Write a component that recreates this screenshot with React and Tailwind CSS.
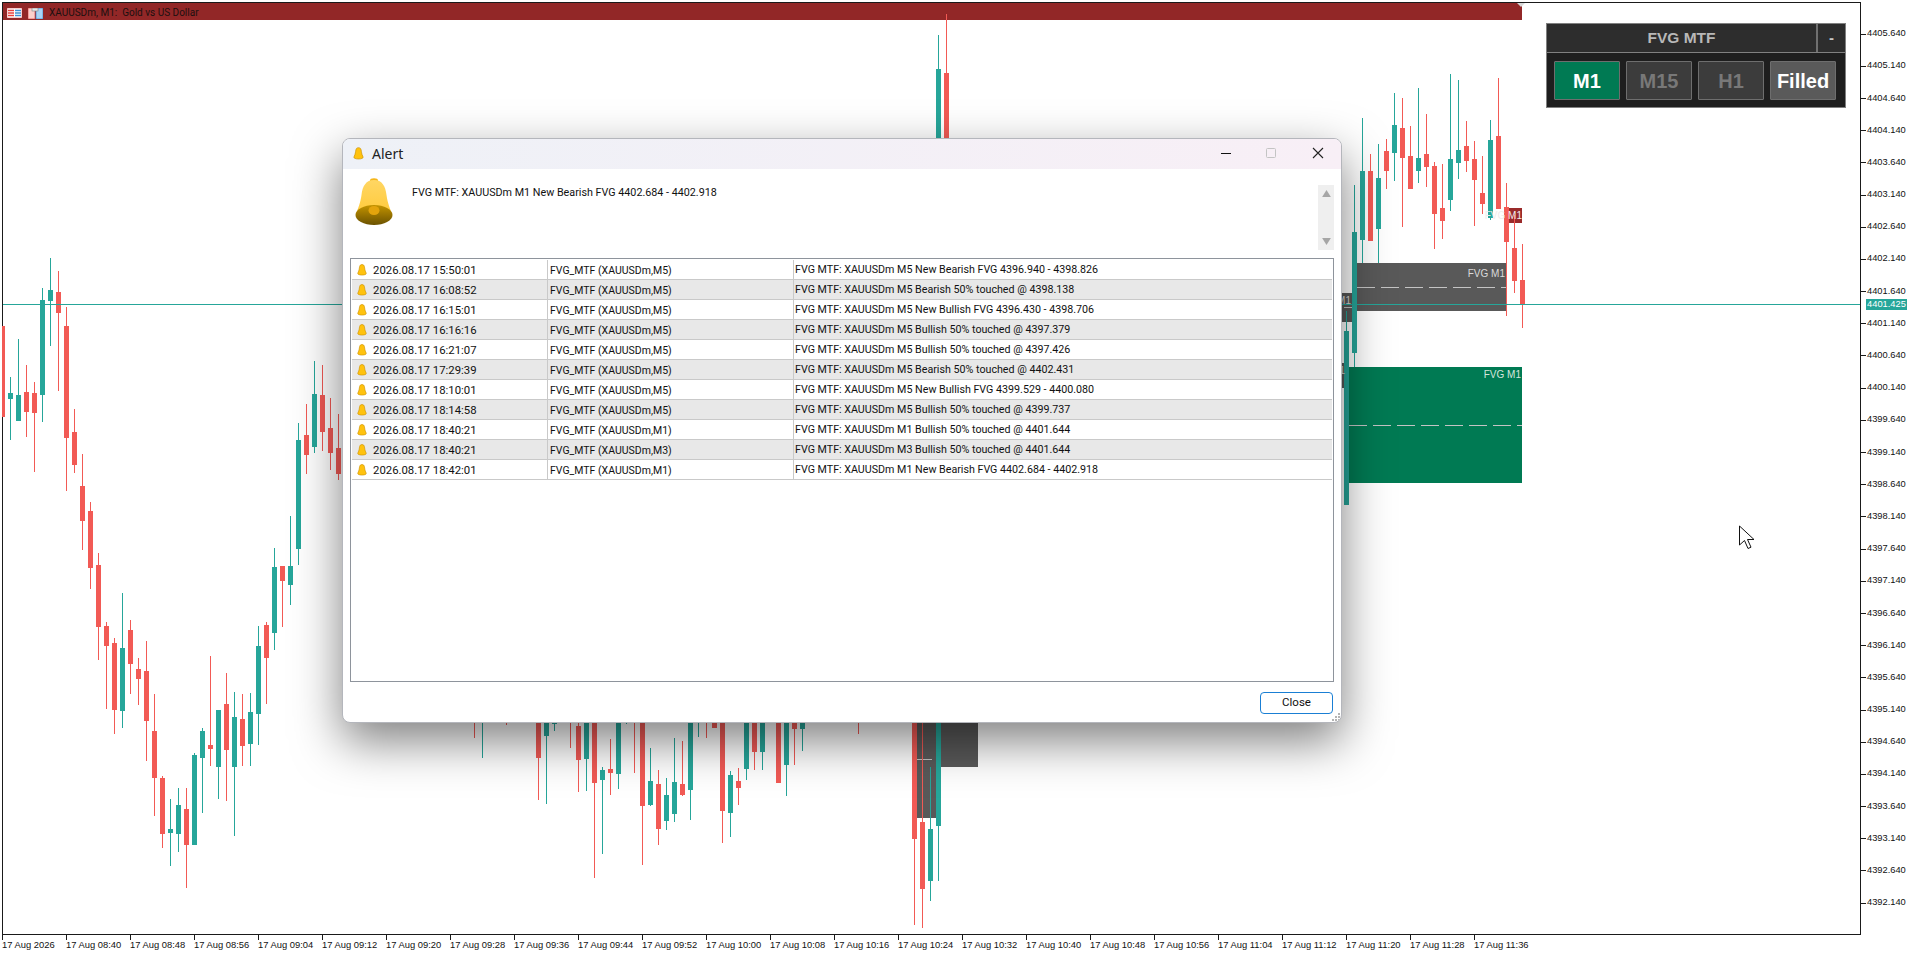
import React from 'react';

const UP = '#26a69a';
const DOWN = '#f25a55';

// [x, up?, wickTop, wickBottom, bodyTop, bodyBottom] in page pixels
const candles = [
  [2, 0, 326, 417, 326, 417],
  [10, 1, 377, 440, 393, 399],
  [18, 1, 339, 421, 395, 421],
  [26, 0, 365, 437, 392, 412],
  [34, 0, 382, 472, 393, 413],
  [42, 1, 288, 422, 300, 395],
  [50, 1, 258, 346, 290, 301],
  [58, 0, 271, 391, 292, 313],
  [66, 0, 307, 491, 326, 438],
  [74, 0, 409, 473, 432, 465],
  [82, 0, 454, 550, 486, 521],
  [90, 0, 502, 589, 511, 568],
  [98, 0, 553, 660, 565, 627],
  [106, 0, 622, 709, 626, 646],
  [114, 0, 638, 734, 643, 710],
  [122, 1, 593, 728, 648, 711],
  [130, 0, 620, 694, 630, 664],
  [138, 0, 658, 705, 669, 679],
  [146, 0, 641, 761, 671, 721],
  [154, 0, 694, 816, 731, 778],
  [162, 0, 776, 848, 778, 834],
  [170, 1, 799, 866, 829, 833],
  [178, 1, 788, 852, 805, 834],
  [186, 0, 788, 888, 809, 845],
  [194, 1, 753, 845, 755, 845],
  [202, 1, 728, 813, 731, 758],
  [210, 0, 656, 766, 745, 749],
  [218, 1, 710, 799, 710, 767],
  [226, 0, 673, 801, 704, 750],
  [234, 1, 692, 836, 717, 767],
  [242, 0, 694, 766, 719, 746],
  [250, 1, 693, 766, 712, 744],
  [258, 1, 626, 745, 646, 714],
  [266, 0, 622, 704, 625, 658],
  [274, 1, 548, 650, 567, 633],
  [282, 0, 566, 627, 566, 581],
  [290, 1, 516, 605, 566, 585],
  [298, 1, 423, 565, 440, 549],
  [306, 0, 404, 474, 435, 455],
  [314, 1, 361, 453, 394, 447],
  [322, 0, 365, 451, 395, 432],
  [330, 0, 398, 470, 428, 453],
  [338, 0, 414, 480, 448, 474],
  // under the dialog
  [474, 0, 700, 738, 700, 700],
  [482, 1, 700, 758, 700, 700],
  [506, 0, 700, 725, 700, 700],
  [538, 0, 700, 800, 700, 758],
  [546, 1, 700, 804, 700, 736],
  [554, 1, 700, 731, 700, 724],
  [570, 0, 700, 748, 700, 700],
  [578, 0, 700, 792, 726, 760],
  [586, 1, 700, 791, 700, 759],
  [594, 0, 700, 878, 700, 783],
  [602, 1, 767, 854, 770, 780],
  [610, 0, 739, 795, 769, 773],
  [618, 1, 700, 789, 700, 774],
  [626, 1, 700, 724, 700, 700],
  [634, 0, 700, 773, 700, 700],
  [642, 0, 700, 865, 700, 806],
  [650, 1, 748, 806, 781, 805],
  [658, 0, 770, 845, 784, 829],
  [666, 1, 778, 830, 795, 821],
  [674, 1, 738, 822, 782, 814],
  [682, 0, 741, 796, 784, 795],
  [690, 1, 700, 820, 700, 790],
  [698, 1, 700, 737, 700, 700],
  [706, 0, 700, 738, 700, 700],
  [714, 0, 700, 728, 700, 728],
  [722, 0, 700, 843, 700, 811],
  [730, 1, 771, 837, 775, 813],
  [738, 0, 768, 805, 781, 788],
  [746, 1, 700, 780, 700, 769],
  [754, 0, 700, 770, 700, 752],
  [762, 1, 700, 770, 700, 752],
  [778, 0, 700, 783, 700, 783],
  [786, 1, 700, 796, 700, 765],
  [794, 0, 700, 765, 700, 729],
  [802, 1, 700, 751, 700, 729],
  [858, 0, 700, 734, 700, 700],
  [914, 0, 700, 925, 700, 839],
  [922, 0, 700, 928, 822, 889],
  [930, 1, 767, 901, 829, 881],
  [938, 1, 35, 881, 69, 826],
  [946, 0, 14, 300, 73, 300],
  // right of the dialog
  [1346, 1, 311, 505, 331, 505],
  [1354, 1, 185, 367, 232, 353],
  [1362, 1, 118, 263, 171, 240],
  [1370, 0, 154, 241, 171, 241],
  [1378, 1, 144, 263, 178, 229],
  [1386, 0, 139, 189, 151, 171],
  [1394, 1, 93, 181, 125, 153],
  [1402, 0, 98, 227, 128, 158],
  [1410, 0, 126, 189, 156, 189],
  [1418, 1, 88, 183, 158, 171],
  [1426, 0, 114, 187, 154, 167],
  [1434, 0, 162, 249, 166, 214],
  [1442, 0, 164, 239, 208, 221],
  [1450, 1, 74, 211, 159, 200],
  [1458, 1, 80, 179, 150, 163],
  [1466, 0, 121, 172, 146, 161],
  [1474, 0, 141, 226, 159, 180],
  [1482, 0, 156, 214, 193, 204],
  [1490, 1, 120, 220, 140, 218],
  [1498, 0, 78, 209, 136, 209],
  [1506, 0, 183, 316, 207, 242],
  [1514, 0, 215, 293, 248, 281],
  [1522, 0, 244, 328, 280, 305],
];

const alerts = [
  ['2026.08.17 15:50:01', 'FVG_MTF (XAUUSDm,M5)', 'FVG MTF: XAUUSDm M5 New Bearish FVG 4396.940 - 4398.826'],
  ['2026.08.17 16:08:52', 'FVG_MTF (XAUUSDm,M5)', 'FVG MTF: XAUUSDm M5 Bearish 50% touched @ 4398.138'],
  ['2026.08.17 16:15:01', 'FVG_MTF (XAUUSDm,M5)', 'FVG MTF: XAUUSDm M5 New Bullish FVG 4396.430 - 4398.706'],
  ['2026.08.17 16:16:16', 'FVG_MTF (XAUUSDm,M5)', 'FVG MTF: XAUUSDm M5 Bullish 50% touched @ 4397.379'],
  ['2026.08.17 16:21:07', 'FVG_MTF (XAUUSDm,M5)', 'FVG MTF: XAUUSDm M5 Bullish 50% touched @ 4397.426'],
  ['2026.08.17 17:29:39', 'FVG_MTF (XAUUSDm,M5)', 'FVG MTF: XAUUSDm M5 Bearish 50% touched @ 4402.431'],
  ['2026.08.17 18:10:01', 'FVG_MTF (XAUUSDm,M5)', 'FVG MTF: XAUUSDm M5 New Bullish FVG 4399.529 - 4400.080'],
  ['2026.08.17 18:14:58', 'FVG_MTF (XAUUSDm,M5)', 'FVG MTF: XAUUSDm M5 Bullish 50% touched @ 4399.737'],
  ['2026.08.17 18:40:21', 'FVG_MTF (XAUUSDm,M1)', 'FVG MTF: XAUUSDm M1 Bullish 50% touched @ 4401.644'],
  ['2026.08.17 18:40:21', 'FVG_MTF (XAUUSDm,M3)', 'FVG MTF: XAUUSDm M3 Bullish 50% touched @ 4401.644'],
  ['2026.08.17 18:42:01', 'FVG_MTF (XAUUSDm,M1)', 'FVG MTF: XAUUSDm M1 New Bearish FVG 4402.684 - 4402.918'],
];

const prices = Array.from({ length: 28 }, (_, i) => (4405.64 - i * 0.5).toFixed(3));

const pad = (n) => n.toString().padStart(2, '0');
const times = Array.from({ length: 24 }, (_, i) => {
  if (i === 0) return '17 Aug 2026';
  const mins = 8 * 60 + 32 + i * 8;
  return `17 Aug ${pad(Math.floor(mins / 60))}:${pad(mins % 60)}`;
});

const SmallBell = ({ className }) => (
  <svg viewBox="0 0 10 12" className={className}>
    <path d="M5 .6C3.6.6 3 1.2 2.6 2.6 2.2 4.4 2.2 6.4 1 8.6c-.4.8-.3 1.5.4 1.8 1 .5 2.3.7 3.6.7s2.6-.2 3.6-.7c.7-.3.8-1 .4-1.8C7.8 6.4 7.8 4.4 7.4 2.6 7 1.2 6.4.6 5 .6Z" fill="#ffc20e" stroke="#c98f00" strokeWidth=".6" />
  </svg>
);

const BigBell = () => (
  <svg viewBox="0 0 38 48" className="w-[38px] h-[48px]">
    <defs>
      <linearGradient id="bellTop" x1="0" y1="0" x2="0" y2="1">
        <stop offset="0" stopColor="#ffd663" />
        <stop offset="1" stopColor="#ffca3a" />
      </linearGradient>
      <linearGradient id="bellMouth" x1="0" y1="0" x2="0" y2="1">
        <stop offset="0" stopColor="#c39300" />
        <stop offset="1" stopColor="#6b5200" />
      </linearGradient>
    </defs>
    <ellipse cx="19" cy="2.6" rx="4" ry="2.4" fill="#f5b61a" />
    <path d="M19 2C11 2 7.5 8 6.5 17 5.5 25 3 30 .8 37h36.4C35 30 32.5 25 31.5 17 30.5 8 27 2 19 2Z" fill="url(#bellTop)" />
    <ellipse cx="19" cy="37" rx="18.5" ry="10" fill="url(#bellMouth)" />
    <ellipse cx="19" cy="32.5" rx="5.5" ry="4.5" fill="#e3a40c" />
  </svg>
);

const Chart = () => (
  <svg viewBox="0 0 1920 955" className="absolute top-0 left-0 w-[1920px] h-[955px] pointer-events-none">
    <polygon points="1517,3 1525,3 1521,7" fill="#d8d8d8" />
    {/* FVG zones */}
    <rect x="1357" y="263" width="149" height="48" fill="#595959" />
    <line x1="1357" x2="1506" y1="287.5" y2="287.5" stroke="#c4c4c4" strokeDasharray="18 6" />
    <rect x="1200" y="293" width="152" height="29" fill="#595959" />
    <line x1="1200" x2="1352" y1="307.5" y2="307.5" stroke="#c4c4c4" strokeDasharray="18 6" />
    <rect x="1200" y="363" width="149" height="25" fill="#595959" />
    <rect x="1349" y="367" width="173" height="116" fill="#007a53" />
    <line x1="1349" x2="1522" y1="425.5" y2="425.5" stroke="#c4c4c4" strokeDasharray="18 6" />
    <rect x="917" y="600" width="19" height="218" fill="#595959" />
    <rect x="941" y="600" width="37" height="167" fill="#595959" />
    <line x1="917" x2="932" y1="759.5" y2="759.5" stroke="#c4c4c4" />
    <rect x="1509" y="208" width="13" height="15" fill="#9a2a2a" />

    {candles.map(([x, up, wt, wb, bt, bb]) => (
      <g key={x} fill={up ? UP : DOWN}>
        <rect x={x} y={wt} width="1" height={wb - wt} />
        {x === 2 ? (
          <rect x="3" y={bt} width="2" height={bb - bt} />
        ) : (
          bb > bt && <rect x={x - 2} y={bt} width="5" height={bb - bt} />
        )}
      </g>
    ))}

    <line x1="3" x2="1860" y1="304.5" y2="304.5" stroke={UP} />

    <g className="font-['Liberation_Sans',sans-serif] text-[10px]" textAnchor="end">
      <text x="1505" y="277" fill="#d9d9d9">FVG M1</text>
      <text x="1351" y="304" fill="#d9d9d9">FVG M1</text>
      <text x="1345" y="374" fill="#d9d9d9">FVG M1</text>
      <text x="1521" y="378" fill="#d5e5dc">FVG M1</text>
      <text x="1522" y="219" fill="#f0eded">FVG M1</text>
    </g>
  </svg>
);

const TfButton = ({ label, className }) => (
  <div className={`w-[66px] h-[39px] flex items-center justify-center border border-[#6e6e6e] rounded-[1px] text-[20px] font-bold ${className}`}>
    {label}
  </div>
);

const TfPanel = () => (
  <div className="absolute left-[1546px] top-[23px] w-[300px] h-[85px] bg-[#1e1e1e] border border-[#808080] font-['Liberation_Sans',sans-serif]">
    <div className="flex h-[29px] border-b border-[#808080] bg-[#2d2d2d]">
      <div className="flex-1 flex items-center justify-center text-[15.5px] font-bold text-[#b8b8b8]">FVG MTF</div>
      <div className="w-[29px] flex items-center justify-center border-l-2 border-[#707070] text-[15px] font-bold text-[#c8c8c8]">-</div>
    </div>
    <div className="flex gap-[6px] pl-[7px] pt-[8px]">
      <TfButton label="M1" className="bg-[#007a53] text-white" />
      <TfButton label="M15" className="bg-[#3c3c3c] text-[#787878]" />
      <TfButton label="H1" className="bg-[#3c3c3c] text-[#787878]" />
      <TfButton label="Filled" className="bg-[#5a5a5a] text-white" />
    </div>
  </div>
);

const AlertDialog = () => (
  <div className="absolute left-[342px] top-[138px] w-[1000px] h-[585px] flex flex-col bg-white border border-[#b4b6bc] rounded-[8px] overflow-hidden shadow-[0_18px_48px_rgba(0,0,0,0.5)] text-[#111] font-['Roboto',sans-serif]">
    <div className="h-[30px] shrink-0 flex items-center pb-[2px] pl-[10px] bg-gradient-to-r from-[#eef1f7] to-[#f8eff6]">
      <SmallBell className="w-[11px] h-[13px]" />
      <span className="ml-[8px] text-[14px] text-[#222] font-['Noto_Sans',sans-serif]">Alert</span>
      <svg viewBox="0 0 110 14" className="ml-auto mr-[10px] w-[110px] h-[14px]">
        <line x1="0" x2="10" y1="7.5" y2="7.5" stroke="#111" />
        <rect x="45.5" y="2.5" width="9" height="9" rx="1" fill="none" stroke="#c4c4c4" />
        <path d="M92 2l10 10M102 2L92 12" stroke="#222" strokeWidth="1.1" fill="none" />
      </svg>
    </div>

    <div className="h-[89px] shrink-0 flex pl-[12px] pr-[7px]">
      <div className="mt-[9px]"><BigBell /></div>
      <div className="ml-[19px] mt-[17px] text-[10.75px] leading-[14px]">FVG MTF: XAUUSDm M1 New Bearish FVG 4402.684 - 4402.918</div>
      <div className="ml-auto mt-[16px] w-[16px] h-[65px] bg-[#efefef] flex flex-col items-center justify-between py-[5px]">
        <svg viewBox="0 0 10 8" className="w-[9px] h-[7px]"><polygon points="5,0 10,8 0,8" fill="#a6a6a6" /></svg>
        <svg viewBox="0 0 10 8" className="w-[9px] h-[7px]"><polygon points="0,0 10,0 5,8" fill="#a6a6a6" /></svg>
      </div>
    </div>

    <div className="mx-[7px] h-[424px] shrink-0 border border-[#8e949c] pt-px px-px">
      {alerts.map((row, i) => (
        <div key={i} className={`h-[20px] flex items-center border-b border-[#c9c9c9] ${i % 2 ? 'bg-[#e8e8e8]' : 'bg-white'}`}>
          <div className="w-[196px] h-full flex items-center pl-[5px] border-r border-[#c9c9c9]">
            <SmallBell className="w-[10px] h-[12px]" />
            <span className="ml-[6px] pt-[2px] text-[11.35px]">{row[0]}</span>
          </div>
          <div className="w-[246px] h-full flex items-center pl-[2px] pt-[2px] border-r border-[#c9c9c9] text-[10.5px]">{row[1]}</div>
          <div className="pl-[1px] pt-[2px] text-[10.7px]">{row[2]}</div>
        </div>
      ))}
    </div>

    <div className="flex-1 relative flex justify-end pr-[8px] pt-[10px]">
      <div className="w-[73px] h-[22px] flex items-center justify-center border-[1.5px] border-[#1a7fd4] rounded-[4px] text-[11.5px]">Close</div>
      <svg viewBox="0 0 8 8" className="absolute right-[1px] bottom-[1px] w-[8px] h-[8px]">
        <g fill="#b4b4b4">
          <rect x="6" y="0" width="2" height="2" />
          <rect x="3" y="3" width="2" height="2" />
          <rect x="6" y="3" width="2" height="2" />
          <rect x="0" y="6" width="2" height="2" />
          <rect x="3" y="6" width="2" height="2" />
          <rect x="6" y="6" width="2" height="2" />
        </g>
      </svg>
    </div>
  </div>
);

export default function App() {
  return (
    <div className="relative w-[1920px] h-[955px] overflow-hidden bg-white pt-[2px] pl-[2px] font-['Liberation_Sans',sans-serif] text-[#111]">
      <div className="flex h-[933px]">
        <div className="w-[1859px] border border-[#1a1a1a]">
          <div className="w-[1519px] h-[17px] bg-[#922727] flex items-center pl-[4px] pt-[3px]">
            <svg viewBox="0 0 15 10" className="w-[15px] h-[10px]">
              <rect width="15" height="10" fill="#fff" stroke="#e25a5a" strokeWidth=".6" />
              <path d="M1 2.5h6M1 5h6M1 7.5h6" stroke="#e8403c" strokeWidth="1.4" />
              <path d="M8 2.5h6M8 5h6M8 7.5h6" stroke="#3f8fd2" strokeWidth="1.4" />
            </svg>
            <svg viewBox="0 0 15 11" className="ml-[6px] w-[15px] h-[11px]">
              <rect width="7" height="11" fill="#fbd0cc" stroke="#e8403c" strokeWidth=".7" />
              <rect x="8" width="7" height="11" fill="#a9d4f5" stroke="#2f80c8" strokeWidth=".7" />
              <rect x="4" y="0" width="6" height="3" fill="#e8e8e8" stroke="#808080" strokeWidth=".6" />
            </svg>
            <span className="ml-[6px] text-[10px] leading-none text-[#1c1010] whitespace-pre font-['Roboto',sans-serif]">XAUUSDm, M1:  Gold vs US Dollar</span>
          </div>
        </div>
        <div className="relative flex-1 pt-[16px] text-[9.3px]">
          {prices.map((p) => (
            <div key={p} className="h-[32.2px] flex items-center">
              <span className="w-[5px] h-px bg-[#1a1a1a]" />
              <span className="ml-px">{p}</span>
            </div>
          ))}
          <div className="absolute top-[297px] left-[5px] w-[41px] h-[11px] flex items-center justify-center bg-[#26a69a] text-white">4401.425</div>
        </div>
      </div>
      <div className="flex text-[9.4px]">
        {times.map((t) => (
          <div key={t} className="w-[64px] shrink-0">
            <div className="w-px h-[5px] bg-[#1a1a1a]" />
            <div className="-mt-[1px] whitespace-nowrap leading-[12px]">{t}</div>
          </div>
        ))}
      </div>
      <Chart />
      <TfPanel />
      <AlertDialog />
      {/* mouse pointer */}
      <svg viewBox="0 0 17 26" className="absolute left-[1738px] top-[525px] w-[17px] h-[26px]">
        <path d="M1.5 1v19l5-4.5 3.5 8 3-1.3-3.5-7.7h6.5Z" fill="#fff" stroke="#111" strokeWidth="1" strokeLinejoin="round" />
      </svg>
    </div>
  );
}
